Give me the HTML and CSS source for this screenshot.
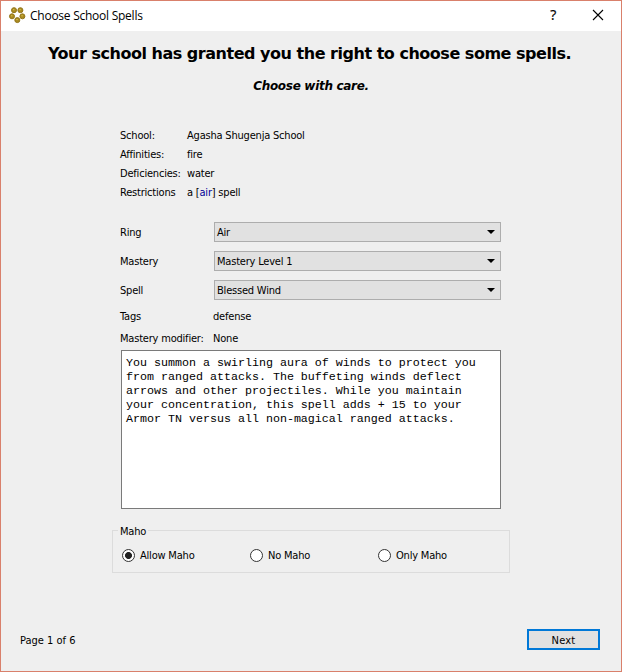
FILE: index.html
```html
<!DOCTYPE html>
<html lang="en">
<head>
<meta charset="utf-8">
<title>Choose School Spells</title>
<link rel="stylesheet" href="styles.css">
</head>
<body>
<div class="window">
  <header class="titlebar">
    <svg class="app-icon" width="16" height="16" viewBox="0 0 16 16">
      <g fill="#a98a20" stroke="#94771c" stroke-width="1">
        <circle cx="5" cy="2.2" r="2.5"/><circle cx="11.4" cy="2.2" r="2.5"/>
        <circle cx="3" cy="8.3" r="2.5"/><circle cx="13.4" cy="8.3" r="2.5"/>
        <circle cx="8.3" cy="12.1" r="2.5"/>
      </g>
      <path d="M4 1.7h1.4M10.4 1.7h1.4M2 7.8h1.4M12.4 7.8h1.4M7.3 11.6h1.4" stroke="#dfc650"/>
    </svg>
    <span class="caption">Choose School Spells</span>
    <span class="help">?</span>
    <svg class="close" width="10" height="10" viewBox="0 0 10 10"><path d="M0 0L10 10M10 0L0 10" stroke="#000" stroke-width="1.1"/></svg>
  </header>
  <main class="page">
    <h1>Your school has granted you the right to choose some spells.</h1>
    <h2>Choose with care.</h2>
    <dl class="info">
      <dt>School:</dt><dd>Agasha Shugenja School</dd>
      <dt>Affinities:</dt><dd>fire</dd>
      <dt>Deficiencies:</dt><dd>water</dd>
      <dt>Restrictions</dt><dd>a [<span class="element">air</span>] spell</dd>
    </dl>
    <div class="form">
      <span class="label">Ring</span><div class="combo"><span class="label">Air</span><svg class="arrow" width="8" height="4" viewBox="0 0 8 4"><path d="M0 0H8L4 4Z"/></svg></div>
      <span class="label">Mastery</span><div class="combo"><span class="label">Mastery Level 1</span><svg class="arrow" width="8" height="4" viewBox="0 0 8 4"><path d="M0 0H8L4 4Z"/></svg></div>
      <span class="label">Spell</span><div class="combo"><span class="label">Blessed Wind</span><svg class="arrow" width="8" height="4" viewBox="0 0 8 4"><path d="M0 0H8L4 4Z"/></svg></div>
      <span class="tags">Tags</span><span class="tags">defense</span>
      <span>Mastery modifier:</span><span>None</span>
    </div>
    <div class="description">You summon a swirling aura of winds to protect you
from ranged attacks. The buffeting winds deflect
arrows and other projectiles. While you maintain
your concentration, this spell adds + 15 to your
Armor TN versus all non-magical ranged attacks.</div>
    <fieldset class="maho">
      <legend><span>Maho</span></legend>
      <label><i class="radio checked"></i><span>Allow Maho</span></label>
      <label><i class="radio"></i><span>No Maho</span></label>
      <label><i class="radio"></i><span>Only Maho</span></label>
    </fieldset>
    <footer class="footer">
      <span class="page-number">Page 1 of 6</span>
      <button class="next">Next</button>
    </footer>
  </main>
</div>
</body>
</html>
```
FILE: styles.css
```css
* { box-sizing: border-box; }
body { margin: 0; }
.window {
  width: 622px; height: 672px;
  display: flex; flex-direction: column;
  border: 1px solid #d9806b;
  background: #efefef; color: #000;
  font: 11px/14px "DejaVu Sans Condensed", "DejaVu Sans", sans-serif;
  font-stretch: condensed;
  letter-spacing: -0.2px;
}
.titlebar {
  height: 30px; flex: none;
  display: flex; align-items: center;
  padding: 0 18px 0 8px;
  background: #fff;
}
.app-icon { overflow: visible; }
.caption { flex: 1; margin-left: 5px; font: 12px/16px "Open Sans", sans-serif; letter-spacing: -0.25px; }
.help { font: 14px/16px "Open Sans", sans-serif; margin: -2px 37px 0 0; -webkit-text-stroke: 0.2px #000; }
.close { overflow: visible; margin-top: -2px; }
.page { flex: 1; display: flex; flex-direction: column; }
h1, h2 { margin: 0; text-align: center; font-family: "DejaVu Sans", sans-serif; font-weight: bold; font-stretch: normal; }
h1 { padding: 12px 3px 0 0; font-size: 16px; line-height: 22px; letter-spacing: -0.48px; }
h2 { margin-top: 13px; font-size: 12px; line-height: 16px; font-style: italic; letter-spacing: -0.3px; }
.info {
  margin: 32px 0 0 119px;
  display: grid; grid-template-columns: 67px auto; grid-auto-rows: 19px;
  align-items: center;
}
.info dd { margin: 0; }
.element { color: #000096; }
.form {
  margin: 20px 0 0 119px; width: 381px; height: 124px;
  display: grid; grid-template-columns: 93px 1fr;
  grid-template-rows: 20px 20px 20px 14px 14px;
  row-gap: 9px; align-items: center;
}
.form .label { padding-top: 1px; }
.form .tags { margin-top: 2px; }
.combo {
  height: 20px; margin-left: 1px;
  display: flex; align-items: center; justify-content: space-between;
  padding: 0 5px 0 2px;
  border: 1px solid #adadad; background: #e1e1e1;
}
.description {
  margin: 4px 0 0 120px; width: 380px; height: 159px;
  padding: 5px 4px;
  border: 1px solid #7a7a7a; background: #fff;
  font: 11.66px/14px "Liberation Mono", monospace;
  letter-spacing: 0; white-space: pre;
}
.maho {
  margin: 14px 0 0 111px; padding: 11px 9px 0; width: 398px; height: 50px;
  border: 1px solid #dcdcdc;
  display: grid; grid-template-columns: 128px 128px auto;
}
.maho legend { margin-left: -4px; padding: 0 2px; height: 14px; }
.maho legend span { display: block; padding-top: 2px; }
.maho label { display: flex; align-items: center; gap: 5px; height: 14px; }
.maho label span { padding-top: 2px; }
.radio {
  width: 13px; height: 13px; flex: none;
  border: 1px solid #333; border-radius: 50%; background: #fff;
}
.checked { background: radial-gradient(circle, #222 0 3.1px, #fff 3.8px); }
.footer {
  margin: auto 21px 21px 19px;
  display: flex; align-items: center; justify-content: space-between;
}
.page-number { padding-top: 2px; letter-spacing: 0; }
.next {
  width: 73px; height: 21px; padding: 2px 0 0;
  border: 2px solid #0078d7; background: #e1e1e1; color: #000;
  font: inherit; letter-spacing: 0.2px;
}
```
